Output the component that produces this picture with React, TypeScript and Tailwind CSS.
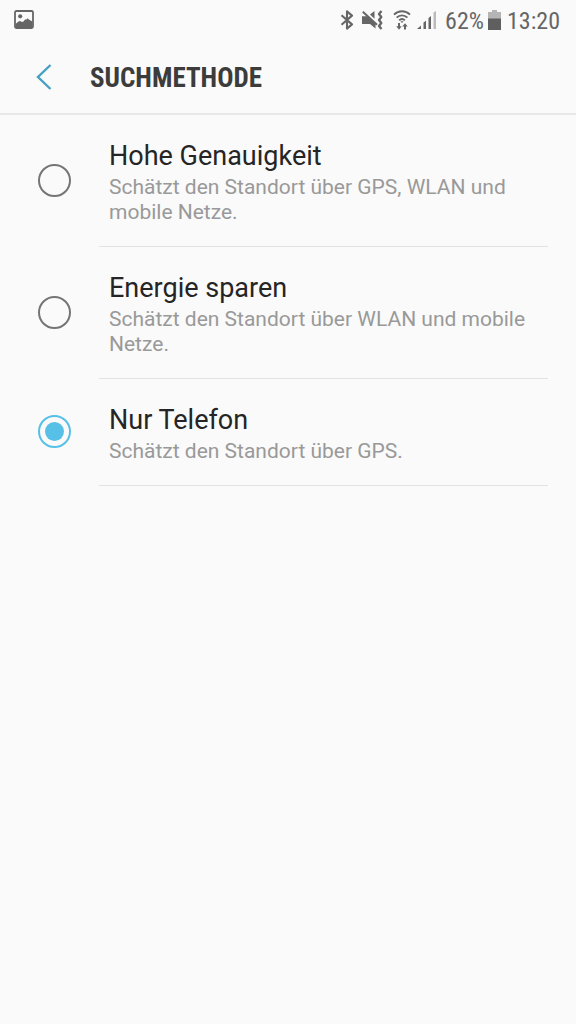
import { useState } from "react";

type SearchMethod = {
  id: string;
  title: string;
  description: string;
};

const METHODS: SearchMethod[] = [
  {
    id: "high-accuracy",
    title: "Hohe Genauigkeit",
    description: "Schätzt den Standort über GPS, WLAN und mobile Netze.",
  },
  {
    id: "battery-saving",
    title: "Energie sparen",
    description: "Schätzt den Standort über WLAN und mobile Netze.",
  },
  {
    id: "phone-only",
    title: "Nur Telefon",
    description: "Schätzt den Standort über GPS.",
  },
];

function PictureIcon() {
  return (
    <svg width="20" height="20" viewBox="0 0 20 20" aria-hidden="true">
      <rect x="1" y="1" width="18" height="17" rx="1.5" fill="none" stroke="#666" strokeWidth="1.8" />
      <circle cx="6.2" cy="6.3" r="2.1" fill="#666" />
      <path d="M1.5 14 4.5 11.5 6 11 8 12 9.5 11.5 11 9.5 12.5 9.5 13.5 8.3 15 9.5 16.5 10.5 18.5 11.5V18H1.5Z" fill="#666" />
    </svg>
  );
}

function BluetoothIcon() {
  return (
    <svg width="14" height="20" viewBox="0 0 14 20" aria-hidden="true">
      <path
        d="M1.5 5.2 12 14.4 7 18.6V1.4L12 5.6 1.5 14.8"
        fill="none"
        stroke="#666"
        strokeWidth="2.1"
        strokeLinejoin="round"
      />
    </svg>
  );
}

function MutedVibrateIcon() {
  return (
    <svg width="21" height="20" viewBox="0 0 21 20" aria-hidden="true">
      <path d="M0 6.2H5L13.5 13.8V18.5L8 14H0Z" fill="#666" />
      <path d="M8 4.6 12.5 1V8.8Z" fill="#666" />
      <path d="M.8 1.8 15 14.8" stroke="#666" strokeWidth="2" />
      <path
        d="M19.5 1 17 4 19.3 7 17 10 19.3 13 17 16 19.5 19"
        fill="none"
        stroke="#666"
        strokeWidth="2.3"
        strokeLinejoin="round"
      />
    </svg>
  );
}

function WifiIcon() {
  return (
    <svg width="18" height="20" viewBox="0 0 18 20" aria-hidden="true">
      <g fill="none" stroke="#666" strokeWidth="1.9">
        <path d="M1 4.6C5.5.2 12.5.2 17 4.6" />
        <path d="M3.6 7.6C6.6 4.6 11.4 4.6 14.4 7.6" />
        <path d="M6.2 10.3C7.8 8.5 10.2 8.5 11.8 10.3" />
      </g>
      <path d="M7.4 11.2H10.6L9 13Z" fill="#666" />
      <path d="M5 13H7V16.3H8.7L6 19.7 3.3 16.3H5Z" fill="#666" />
      <path d="M11 19.5H13V16.6H14.7L12 13.2 9.3 16.6H11Z" fill="#666" />
    </svg>
  );
}

function SignalIcon() {
  return (
    <svg width="20" height="20" viewBox="0 0 20 20" aria-hidden="true">
      <path d="M0 19 4 15.5V19Z" fill="#666" />
      <path d="M6.5 12.5 9 10.8V19H6.5Z" fill="#666" />
      <path d="M11.5 8 14 6V19H11.5Z" fill="#666" />
      <path d="M16.5 2.5 19 1V19H16.5Z" fill="#bbb" />
    </svg>
  );
}

function BatteryIcon() {
  return (
    <svg width="13" height="20" viewBox="0 0 13 20" aria-hidden="true">
      <path d="M4 0H9V2H13V9H0V2H4Z" fill="#b5b5b5" />
      <path d="M0 8.5H13V20H0Z" fill="#5f5f5f" />
    </svg>
  );
}

function StatusBar() {
  return (
    <div className="flex h-10 items-center justify-between pr-4 pl-3.5 font-['Roboto_Condensed','Roboto',sans-serif] text-[24px] leading-6 text-[#666]">
      <PictureIcon />
      <div className="flex items-center">
        <BluetoothIcon />
        <span className="ml-2">
          <MutedVibrateIcon />
        </span>
        <span className="ml-2.5">
          <WifiIcon />
        </span>
        <span className="ml-1.5">
          <SignalIcon />
        </span>
        <span className="ml-2 pt-0.5">62%</span>
        <span className="ml-1">
          <BatteryIcon />
        </span>
        <span className="ml-1.5 pt-0.5">13:20</span>
      </div>
    </div>
  );
}

function Header() {
  return (
    <header className="flex h-[75px] items-center border-b-2 border-[#e8e8e8] pl-9">
      <button type="button" aria-label="Zurück" className="flex w-[54px] items-center">
        <svg width="16" height="26" viewBox="0 0 16 26" aria-hidden="true">
          <path d="M14.5 1 2 13 14.5 25" fill="none" stroke="#45a0c2" strokeWidth="2.4" />
        </svg>
      </button>
      <h1 className="pt-0.5 font-['Roboto_Condensed','Roboto',sans-serif] text-[27px] leading-8 font-bold text-[#3c3c3c]">
        SUCHMETHODE
      </h1>
    </header>
  );
}

export default function App() {
  const [selected, setSelected] = useState("phone-only");

  return (
    <div className="min-h-screen bg-[#fafafa] font-['Roboto',sans-serif]">
      <StatusBar />
      <Header />

      <main>
        {METHODS.map((method) => (
          <label key={method.id} htmlFor={method.id} className="flex cursor-pointer items-center pr-7 pl-[38px]">
            <input
              type="radio"
              id={method.id}
              name="search-method"
              checked={selected === method.id}
              onChange={() => setSelected(method.id)}
              className="mb-0.5 h-[33px] w-[33px] shrink-0 appearance-none rounded-full border-2 border-[#757575] bg-clip-content p-[5px] checked:border-[#57c0e6] checked:bg-[#57c0e6]"
            />
            <span className="ml-7 flex-1 border-b border-[#e2e2e2] pt-[25px] pb-[21px] pl-2.5">
              <span className="block text-[27px] leading-8 text-[#252525]">{method.title}</span>
              <span className="mt-[3px] block text-[21px] leading-[25px] text-[#999]">{method.description}</span>
            </span>
          </label>
        ))}
      </main>
    </div>
  );
}
